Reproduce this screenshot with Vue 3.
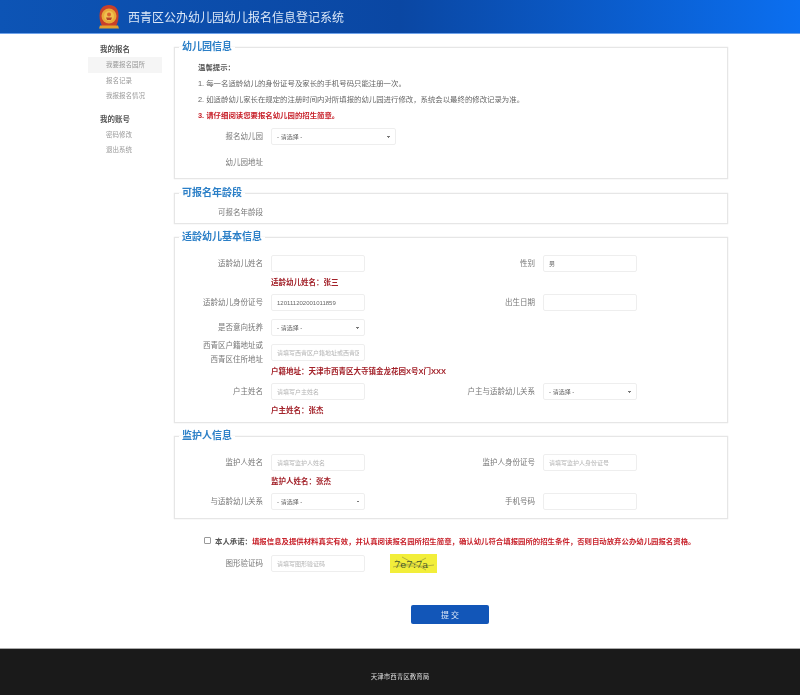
<template>
  <div class="page">
    <!-- top banner -->
    <header class="banner">
      <div class="banner-inner">
        <svg class="emblem" viewBox="0 0 24 26" aria-hidden="true">
          <path d="M12 1C6 1 2.500 5 2.500 11.500 2.500 17 4 20 5 22h14c1-2 2.500-5 2.500-10.500C21.500 5 18 1 12 1z" fill="#c8402a" />
          <circle cx="12" cy="12" r="7.500" fill="#e8a838" />
          <circle cx="12" cy="12" r="5" fill="#f0c050" />
          <path d="M9 13.500h6l-1 2.500h-4z" fill="#b5452a" />
          <circle cx="12" cy="10.500" r="2" fill="#d9622e" />
          <path d="M3 21.500h18l1 3H2z" fill="#e4a02c" />
        </svg>
        <h1 class="banner-title">西青区公办幼儿园幼儿报名信息登记系统</h1>
      </div>
    </header>

    <div class="content">
      <!-- left menu -->
      <aside class="side">
        <template v-for="group in menus" :key="group.title">
          <h4 class="side-title">{{ group.title }}</h4>
          <a
            v-for="item in group.items"
            :key="item"
            class="side-item"
            :class="{ active: item === activeItem }"
          >{{ item }}</a>
        </template>
      </aside>

      <main class="main">
        <fieldset class="box box-school">
          <legend>幼儿园信息</legend>
          <div class="tips">
            <p class="tips-title">温馨提示&#xFF1A;</p>
            <p>1. 每一名适龄幼儿的身份证号及家长的手机号码只能注册一次。</p>
            <p>2. 如适龄幼儿家长在规定的注册时间内对所填报的幼儿园进行修改&#xFF0C;系统会以最终的修改记录为准。</p>
            <p class="tips-red">3. 请仔细阅读您要报名幼儿园的招生简章。</p>
          </div>
          <div class="row row-top">
            <div class="field field-wide">
              <label>报名幼儿园</label>
              <select><option>- 请选择 -</option></select>
            </div>
          </div>
          <div class="row row-addr">
            <div class="field">
              <label>幼儿园地址</label>
            </div>
          </div>
        </fieldset>

        <fieldset class="box box-age">
          <legend>可报名年龄段</legend>
          <div class="row">
            <div class="field">
              <label>可报名年龄段</label>
            </div>
          </div>
        </fieldset>

        <fieldset class="box box-form">
          <legend>适龄幼儿基本信息</legend>
          <div class="row">
            <div class="field">
              <label>适龄幼儿姓名</label>
              <input type="text" />
            </div>
            <div class="field">
              <label>性别</label>
              <input type="text" value="男" />
            </div>
          </div>
          <p class="note">适龄幼儿姓名&#xFF1A;张三</p>
          <div class="row">
            <div class="field">
              <label>适龄幼儿身份证号</label>
              <input type="text" value="120111202001011859" />
            </div>
            <div class="field">
              <label>出生日期</label>
              <input type="text" />
            </div>
          </div>
          <div class="row row-gap">
            <div class="field">
              <label>是否意向抚养</label>
              <select><option>- 请选择 -</option></select>
            </div>
          </div>
          <div class="row row-gap">
            <div class="field">
              <label>西青区户籍地址或<br />西青区住所地址</label>
              <input type="text" placeholder="请填写西青区户籍地址或西青区住所地址" />
            </div>
          </div>
          <p class="note">户籍地址&#xFF1A;天津市西青区大寺镇金龙花园X号X门XXX</p>
          <div class="row">
            <div class="field">
              <label>户主姓名</label>
              <input type="text" placeholder="请填写户主姓名" />
            </div>
            <div class="field">
              <label>户主与适龄幼儿关系</label>
              <select><option>- 请选择 -</option></select>
            </div>
          </div>
          <p class="note">户主姓名&#xFF1A;张杰</p>
        </fieldset>

        <fieldset class="box box-form box-guardian">
          <legend>监护人信息</legend>
          <div class="row">
            <div class="field">
              <label>监护人姓名</label>
              <input type="text" placeholder="请填写监护人姓名" />
            </div>
            <div class="field">
              <label>监护人身份证号</label>
              <input type="text" placeholder="请填写监护人身份证号" />
            </div>
          </div>
          <p class="note">监护人姓名&#xFF1A;张杰</p>
          <div class="row">
            <div class="field">
              <label>与适龄幼儿关系</label>
              <select><option>- 请选择 -</option></select>
            </div>
            <div class="field">
              <label>手机号码</label>
              <input type="text" />
            </div>
          </div>
        </fieldset>

        <div class="promise">
          <input v-model="agreed" type="checkbox" />
          <span class="promise-lead">本人承诺&#xFF1A;</span>
          <span class="promise-text">填报信息及提供材料真实有效&#xFF0C;并认真阅读报名园所招生简章&#xFF0C;确认幼儿符合填报园所的招生条件&#xFF0C;否则自动放弃公办幼儿园报名资格。</span>
        </div>

        <div class="row captcha-row">
          <div class="field">
            <label>图形验证码</label>
            <input type="text" placeholder="请填写图形验证码" />
          </div>
          <svg class="captcha" viewBox="0 0 47 19" aria-label="验证码">
            <rect width="47" height="19" fill="#f2ee3a" />
            <path d="M3 13C12 10 26 14 44 11M12 3 36 16M6 6c8 7 18 5 30-2" fill="none" stroke="#8a8a40" stroke-width=".6" />
            <text x="4" y="14" class="captcha-text">7e7:7a</text>
          </svg>
        </div>

        <div class="actions">
          <button type="button" class="submit">提 交</button>
        </div>
      </main>
    </div>

    <footer class="footer">天津市西青区教育局</footer>
  </div>
</template>

<script setup>
import { ref } from 'vue'

const agreed = ref(false)
const activeItem = '我要报名园所'

const menus = [
  { title: '我的报名', items: ['我要报名园所', '报名记录', '我报报名情况'] },
  { title: '我的账号', items: ['密码修改', '退出系统'] },
]
</script>

<style>
html,
body {
  margin: 0;
  background: #fff;
}
</style>

<style scoped>
.page {
  height: 697px;
  overflow: hidden;
  font-family: "Liberation Sans", "Noto Sans CJK SC", sans-serif;
  font-size: 7.500px;
  color: #666;
  filter: blur(0.6px);
}

/* banner */
.banner {
  height: 33px;
  background: linear-gradient(90deg, #0d54b5 0%, #0a47a3 50%, #0b6ff0 100%);
  border-bottom: 1px solid #6ea2ea;
}
.banner-inner {
  display: flex;
  align-items: center;
  height: 33px;
  padding-left: 97px;
}
.emblem {
  width: 24px;
  height: 26px;
  flex: none;
}
.banner-title {
  margin: 0 0 0 7px;
  font-size: 12px;
  font-weight: 400;
  color: #dbe7f7;
}

.content {
  display: flex;
  gap: 12px;
  padding: 6px 0 0 88px;
}

/* left menu */
.side {
  width: 74px;
  flex: none;
  padding-top: 3px;
}
.side-title {
  margin: 0;
  padding-left: 12px;
  font-size: 7.500px;
  line-height: 14px;
  font-weight: 700;
  color: #555;
}
.side-item {
  display: block;
  height: 15.500px;
  padding-left: 18px;
  font-size: 6.500px;
  line-height: 15.500px;
  color: #999;
}
.side-item.active {
  background: #f5f5f5;
}
.side-item + .side-title {
  margin-top: 9px;
}

.main {
  width: 554px;
  flex: none;
}

/* fieldset boxes */
.box {
  margin: 0 0 6px;
  padding: 6px 0 7px;
  min-width: 0;
  border: 1px solid #e6e6e6;
  box-shadow: 0 0 1px #ddd;
}
.box legend {
  margin-left: 4px;
  padding: 0 3px;
  font-size: 10px;
  line-height: 14px;
  font-weight: 700;
  color: #2b7fc7;
}
.box-school {
  margin-bottom: 7px;
}
.box-age {
  padding: 4px 0 2px;
}
.box-form {
  padding: 11px 0 0;
}
.box-guardian {
  margin-bottom: 0;
  padding-bottom: 8px;
}

.tips {
  padding-left: 23px;
  font-size: 7.400px;
  line-height: 16px;
}
.tips p {
  margin: 0;
  white-space: nowrap;
}
.tips-title {
  font-weight: 700;
  color: #555;
}
.tips-red {
  font-weight: 700;
  color: #c8232c;
}

/* form rows */
.row {
  display: flex;
  align-items: center;
  height: 17px;
}
.row-top {
  margin-top: 4px;
}
.row-addr {
  margin-top: 9px;
}
.row-gap {
  margin-top: 8px;
}
.field {
  display: flex;
  align-items: center;
  gap: 8px;
  width: 272px;
  flex: none;
}
.field label {
  width: 88px;
  flex: none;
  text-align: right;
  line-height: 14px;
  color: #777;
}
.field input[type='text'],
.field select {
  box-sizing: border-box;
  width: 94px;
  height: 17px;
  padding: 0 5px;
  border: 1px solid #eee;
  border-radius: 2px;
  background-color: #fff;
  font: inherit;
  font-size: 6px;
  color: #666;
  outline: none;
}
.field select {
  appearance: none;
  /* small chevron from two gradients */
  background-image:
    linear-gradient(45deg, transparent 50%, #777 50%),
    linear-gradient(135deg, #777 50%, transparent 50%);
  background-size: 2px 2px;
  background-position: right 6px center, right 4px center;
  background-repeat: no-repeat;
}
.field input::placeholder {
  color: #b5b5b5;
}
.field-wide select {
  width: 125px;
}
.note {
  margin: 0;
  height: 22px;
  padding-left: 96px;
  line-height: 22px;
  font-weight: 700;
  color: #a3222a;
  white-space: nowrap;
}

/* promise + captcha */
.promise {
  display: flex;
  align-items: center;
  height: 14px;
  margin-top: 14px;
  padding-left: 30px;
  font-size: 7.400px;
  font-weight: 700;
  white-space: nowrap;
}
.promise input {
  appearance: none;
  width: 7px;
  height: 7px;
  margin: 0 4px 0 0;
  border: 1px solid #999;
  border-radius: 1px;
  background: #fff;
}
.promise-lead {
  color: #555;
}
.promise-text {
  color: #c8232c;
}
.captcha-row {
  margin-top: 8px;
  padding-left: 1px;
}
.captcha {
  width: 47px;
  height: 19px;
  margin-left: -57px;
  flex: none;
}
.captcha-text {
  font-family: "DejaVu Serif", serif;
  font-size: 10px;
  fill: #4c5c2a;
}

.actions {
  display: flex;
  justify-content: center;
  margin-top: 33px;
  padding-right: 2px;
}
.submit {
  width: 78px;
  height: 19px;
  border: 0;
  border-radius: 2px;
  background: #1256b8;
  color: #dce8f8;
  font: inherit;
  font-size: 8px;
}

.footer {
  margin-top: 24px;
  height: 47px;
  box-sizing: border-box;
  padding-top: 22px;
  border-top: 1px solid #aaa;
  background: #1a1a1a;
  color: #ddd;
  font-size: 6.500px;
  line-height: 12px;
  text-align: center;
}
</style>
